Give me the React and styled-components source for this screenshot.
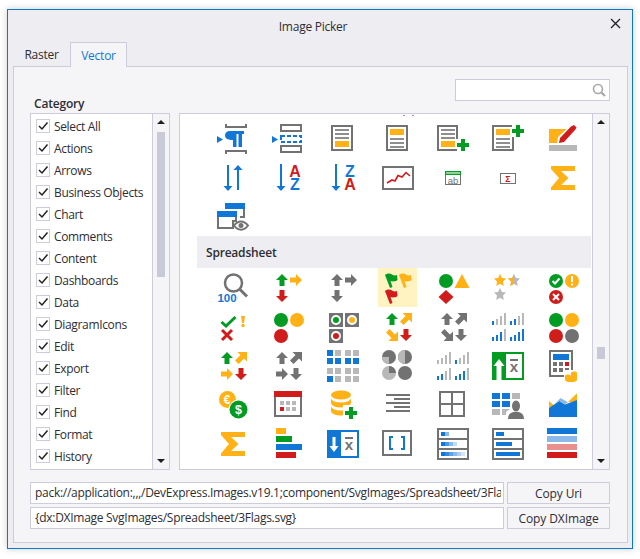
import React from 'react';
import styled, { createGlobalStyle } from 'styled-components';

const BLUE = '#1177d7';
const RED = '#d11c1c';
const YELLOW = '#ffb115';
const GREEN = '#039c23';
const GRAY = '#727272';
const LIGHT = '#b8b8b8';

const GlobalStyle = createGlobalStyle`
    html, body {
        margin: 0;
        background: #fff;
    }
    body {
        font-family: "Open Sans", "Liberation Sans", sans-serif;
        font-size: 12px;
        color: #2d2d33;
    }
`;

const Page = styled.div`
    width: 640px;
    height: 559px;
    padding: 9px 7px 10px 7px;
    box-sizing: border-box;
    overflow: hidden;
`;

const Dialog = styled.div`
    width: 626px;
    height: 540px;
    box-sizing: border-box;
    border: 1px solid #0e78c6;
    background: #eeeef2;
    box-shadow: 0 0 7px rgba(0, 0, 0, 0.2);
    display: flex;
    flex-direction: column;
`;

const TitleBar = styled.div`
    height: 32px;
    flex: none;
    box-sizing: border-box;
    padding-right: 14px;
    display: flex;
    align-items: center;
    justify-content: center;
    position: relative;
    font-size: 12px;
    letter-spacing: -0.25px;
`;

const CloseButton = styled.svg`
    position: absolute;
    right: 11px;
    top: 8px;
    width: 11px;
    height: 11px;
`;

const TabStrip = styled.div`
    height: 24px;
    flex: none;
    margin: 0 0 0 5px;
    display: flex;
    position: relative;
    z-index: 1;
`;

const Tab = styled.div`
    width: 57px;
    height: ${(p) => (p.$active ? '25px' : '24px')};
    box-sizing: border-box;
    display: flex;
    align-items: center;
    justify-content: center;
    letter-spacing: -0.25px;
    color: ${(p) => (p.$active ? BLUE : '#2d2d33')};
    background: ${(p) => (p.$active ? '#f5f5f8' : 'transparent')};
    border: 1px solid ${(p) => (p.$active ? '#ccccdc' : 'transparent')};
    border-bottom: none;
`;

const Panel = styled.div`
    width: 615px;
    height: 477px;
    flex: none;
    margin-left: 5px;
    box-sizing: border-box;
    border: 1px solid #ccccdc;
    background: #f5f5f8;
    padding: 12px 17px 0 16px;
    display: flex;
    flex-direction: column;
`;

const HeaderRow = styled.div`
    height: 34px;
    flex: none;
    display: flex;
    justify-content: space-between;
`;

const CategoryLabel = styled.div`
    align-self: flex-end;
    margin: 0 0 1px 4px;
    font-weight: 600;
    line-height: 16px;
    letter-spacing: -0.2px;
`;

const SearchBox = styled.div`
    width: 155px;
    height: 22px;
    box-sizing: border-box;
    border: 1px solid #ccccdc;
    background: #fff;
    display: flex;
    align-items: center;
    justify-content: flex-end;
    padding-right: 3px;
`;

const Content = styled.div`
    height: 357px;
    flex: none;
    display: flex;
    gap: 9px;
`;

const ListBox = styled.div`
    width: 140px;
    box-sizing: border-box;
    border: 1px solid #ccccdc;
    background: #fff;
    display: flex;
`;

const ListItems = styled.div`
    flex: 1;
    padding: 1px 0 0 5px;
    overflow: hidden;
`;

const ListRow = styled.div`
    height: 22px;
    display: flex;
    align-items: center;
    gap: 4px;
    white-space: nowrap;
    letter-spacing: -0.35px;
`;

const CheckBox = styled.span`
    width: 14px;
    height: 14px;
    box-sizing: border-box;
    border: 1px solid #ccccdc;
    background: #fff;
    display: flex;
    align-items: center;
    justify-content: center;
`;

const ScrollTrack = styled.div`
    width: 17px;
    flex: none;
    box-sizing: border-box;
    border-left: 1px solid #ccccdc;
    background: #f5f5f8;
    padding: 6px 0;
    display: flex;
    flex-direction: column;
    align-items: center;
`;

const ScrollArrow = styled.span`
    flex: none;
    width: 0;
    height: 0;
    border-left: 4px solid transparent;
    border-right: 4px solid transparent;
    ${(p) => (p.$down ? 'border-top: 4px solid #1e1e1e;' : 'border-bottom: 4px solid #1e1e1e;')}
`;

const ThumbSlot = styled.div`
    flex: 1;
    padding-top: ${(p) => p.$offset}px;
`;

const Thumb = styled.div`
    width: 8px;
    height: ${(p) => p.$length}px;
    background: #c9cad8;
`;

const Gallery = styled.div`
    width: 431px;
    box-sizing: border-box;
    border: 1px solid #ccccdc;
    background: #fff;
    display: flex;
`;

const GalleryBody = styled.div`
    flex: 1;
    padding-left: 17px;
    overflow: hidden;
`;

const PeekMarks = styled.svg`
    display: block;
    width: 394px;
    height: 5px;
`;

const IconGrid = styled.div`
    display: grid;
    grid-template-columns: repeat(7, 55px);
    grid-auto-rows: 39px;
    padding-left: 8px;
`;

const IconCell = styled.div`
    display: flex;
    justify-content: center;
`;

const Glyph = styled.svg`
    width: 39px;
    height: 39px;
    display: block;
    background: ${(p) => (p.$selected ? '#fff3c2' : 'transparent')};
`;

const SectionTitle = styled.div`
    width: 394px;
    height: 32px;
    box-sizing: border-box;
    padding-left: 9px;
    background: #eeeef2;
    display: flex;
    align-items: center;
    font-weight: 600;
    letter-spacing: -0.2px;
`;

const Footer = styled.div`
    margin-top: 12px;
    display: flex;
    flex-direction: column;
    gap: 3px;
`;

const FooterRow = styled.div`
    height: 22px;
    display: flex;
    gap: 3px;
`;

const PathField = styled.div`
    width: 474px;
    box-sizing: border-box;
    border: 1px solid #ccccdc;
    background: #fff;
    padding: 0 2px 0 4px;
    display: flex;
    align-items: center;
`;

const PathText = styled.div`
    overflow: hidden;
    white-space: nowrap;
    letter-spacing: -0.28px;
    line-height: 18px;
`;

const FooterButton = styled.div`
    width: 103px;
    box-sizing: border-box;
    border: 1px solid #ccccdc;
    background: #f5f5f8;
    display: flex;
    align-items: center;
    justify-content: center;
    letter-spacing: -0.1px;
`;

const LETTER_FONT = '"Liberation Sans", sans-serif';

// small shared drawings, x/y is the top left of their box
const Arrow = ({ x, y, c, r = 0 }) => (
    <path transform={`translate(${x} ${y}) rotate(${r} 6 6)`} fill={c} d="M6 0 12 6H8.5V12H3.5V6H0Z" />
);
const Slant = ({ x, y, c, r = 0 }) => (
    <path transform={`translate(${x} ${y}) rotate(${r} 6 6)`} fill={c} d="M2.5 0H12V9.5L9 6.5 3.5 12 0 8.5 5.5 3Z" />
);
const Plus = ({ x, y }) => (
    <path transform={`translate(${x} ${y})`} fill={GREEN} d="M4 0H8V4H12V8H8V12H4V8H0V4H4Z" />
);
const Flag = ({ x, y, c }) => (
    <path transform={`translate(${x} ${y})`} fill={c} d="M0 2C2 0 5 0 7 1.500 9 3 11 2.500 12 2L12.500 7C10 9 7 8.500 5.500 8L7.500 14 5 15Z" />
);
const Star = ({ x, y, c }) => (
    <polygon transform={`translate(${x} ${y})`} fill={c} points="6,0 7.900,4 12,4.600 9,7.500 9.700,12 6,9.800 2.300,12 3,7.500 0,4.600 4.100,4" />
);
const Dot = ({ x, y, c, r = 7 }) => <circle cx={x} cy={y} r={r} fill={c} />;
const Signal = ({ x, y, blue }) => (
    <g transform={`translate(${x} ${y})`}>
        {[4, 6, 9, 12].map((h, i) => (
            <rect key={i} x={i * 4} y={12 - h} width="2" height={h} fill={i < blue ? BLUE : LIGHT} />
        ))}
    </g>
);
const Letter = ({ x, y, c, size = 16, children, weight = 700 }) => (
    <text x={x} y={y} fill={c} fontSize={size} fontWeight={weight} fontFamily={LETTER_FONT} textAnchor="middle">
        {children}
    </text>
);
const Lines = ({ rows, x = 12, w = 14 }) => rows.map((y) => <rect key={y} x={x} y={y - 1} width={w} height="2" fill="#8e8e8e" />);
const Frame = ({ x, y, w, h, c = GRAY, fill = 'none' }) => (
    <rect x={x + 1} y={y + 1} width={w - 2} height={h - 2} fill={fill} stroke={c} strokeWidth="2" />
);
const Sigma = () => <path fill={YELLOW} d="M8 8H32V13H18L25.500 20 18 27H32V32H8V29.500L16 20 8 11Z" />;
const XBar = ({ x }) => (
    <>
        <rect x={x - 4} y="13" width="8" height="2" fill={GRAY} />
        <Letter x={x} y="26" c={GRAY} size={15}>x</Letter>
    </>
);

const TOP_ICONS = [
    <>
        <path d="M13 5V8H33V5M13 35V32H33V35" fill="none" stroke={GRAY} strokeWidth="2" />
        <polygon points="4,17 10,20.500 4,24" fill={BLUE} />
        <path fill={BLUE} d="M17 12H31V15H29V28H25.500V15H23.500V28H20V21C15 21 12 19.500 12 16.500 12 13.500 14 12 17 12Z" />
    </>,
    <>
        <polygon points="4,17 10,20.500 4,24" fill={BLUE} />
        <Frame x={12} y={5} w={22} h={8} />
        <rect x="13" y="17" width="20" height="6" fill="none" stroke={BLUE} strokeWidth="2" strokeDasharray="4 2" />
        <Frame x={12} y={26} w={22} h={8} />
    </>,
    <>
        <Frame x={8} y={6} w={22} h={26} />
        <Lines rows={[11, 15, 19]} />
        <rect x="12" y="22" width="14" height="6" fill={YELLOW} />
    </>,
    <>
        <Frame x={8} y={6} w={22} h={26} />
        <rect x="12" y="10" width="14" height="6" fill={YELLOW} />
        <Lines rows={[20, 24, 28]} />
    </>,
    <>
        <path fill="none" stroke={GRAY} strokeWidth="2" d="M24 20V7H5V31H24" />
        <Lines rows={[11, 15, 19]} x={8} />
        <rect x="8" y="22" width="14" height="6" fill={YELLOW} />
        <Plus x={24} y={20} />
    </>,
    <>
        <path fill="none" stroke={GRAY} strokeWidth="2" d="M24 7H5V31H25V18" />
        <rect x="8" y="10" width="14" height="6" fill={YELLOW} />
        <Lines rows={[20, 24, 28]} x={8} />
        <Plus x={24} y={6} />
    </>,
    <>
        <path fill={YELLOW} d="M6 10H24L15 22V24H6Z" />
        <rect x="6" y="26" width="28" height="6" fill={LIGHT} />
        <path fill="#fff" d="M14 25 15 18 29 5 35 11 21 25Z" />
        <path fill={RED} d="M16 24 17 19 28 7.500 31 6 33.500 8.500 32 11 21 23Z" />
    </>,
    <>
        <path fill="none" stroke={BLUE} strokeWidth="2" d="M15 7V30" />
        <polygon points="10.500,28 19.500,28 15,33" fill={BLUE} />
        <path fill="none" stroke={BLUE} strokeWidth="2" d="M25 10V32" />
        <polygon points="20.500,12 29.500,12 25,7" fill={BLUE} />
    </>,
    <>
        <path fill="none" stroke={BLUE} strokeWidth="2" d="M13 6V30" />
        <polygon points="8.500,28 17.500,28 13,33" fill={BLUE} />
        <Letter x={27} y="18.500" c={RED}>A</Letter>
        <Letter x={27} y="32" c={BLUE}>Z</Letter>
    </>,
    <>
        <path fill="none" stroke={BLUE} strokeWidth="2" d="M13 6V30" />
        <polygon points="8.500,28 17.500,28 13,33" fill={BLUE} />
        <Letter x={27} y="18.500" c={BLUE}>Z</Letter>
        <Letter x={27} y="32" c={RED}>A</Letter>
    </>,
    <>
        <Frame x={4} y={8} w={32} h={24} />
        <polyline fill="none" stroke={RED} strokeWidth="1.600" points="9,25 14,22 17,23 20,17.500 24,19 28,14.500 32,18" />
    </>,
    <>
        <rect x="12.500" y="13.500" width="15" height="13" fill="#fff" stroke={GRAY} />
        <rect x="12" y="13" width="16" height="4" fill={GREEN} />
        <rect x="13" y="14" width="14" height="2" fill="#8fd29f" />
        <Letter x={20} y="25.500" c={GRAY} size={9.500} weight={400}>ab</Letter>
    </>,
    <>
        <rect x="12.500" y="15.500" width="15" height="10" fill="#fff" stroke={GRAY} />
        <Letter x={20} y="24" c={RED} size={9}>Σ</Letter>
    </>,
    <Sigma />,
    <>
        <path fill="none" stroke={GRAY} strokeWidth="2" d="M13 8V7H31V20H27" />
        <rect x="12" y="6" width="20" height="6" fill={BLUE} />
        <path fill="#fff" stroke={GRAY} strokeWidth="2" d="M5 15H23V24H20V31H5Z" />
        <rect x="4" y="14" width="20" height="6" fill={BLUE} />
        <path fill="#fff" stroke={GRAY} strokeWidth="2" d="M21 28.500C25 23 31 23 35 28.500 31 34 25 34 21 28.500Z" />
        <circle cx="28" cy="28.500" r="2.500" fill={GRAY} />
    </>,
];

const SHEET_ICONS = [
    <>
        <circle cx="20.500" cy="15" r="8.500" fill="none" stroke={GRAY} strokeWidth="2.500" />
        <path d="M26.500 21 34 28.500" stroke={GRAY} strokeWidth="3" />
        <Letter x={14} y="34" c={BLUE} size={11.500}>100</Letter>
    </>,
    <>
        <Arrow x={8} y={6} c={GREEN} />
        <Arrow x={22} y={6} c={YELLOW} r={90} />
        <Arrow x={8} y={22} c={RED} r={180} />
    </>,
    <>
        <Arrow x={8} y={6} c={GRAY} />
        <Arrow x={22} y={6} c={GRAY} r={90} />
        <Arrow x={8} y={22} c={GRAY} r={180} />
    </>,
    <>
        <Flag x={7} y={5} c={GREEN} />
        <Flag x={21} y={5} c={YELLOW} />
        <Flag x={7} y={21} c={RED} />
    </>,
    <>
        <Dot x={13} y={13} c={GREEN} />
        <polygon points="29,6 36.500,20 21.500,20" fill={YELLOW} />
        <polygon points="13,22 20.500,29 13,36 5.500,29" fill={RED} />
    </>,
    <>
        <Star x={6} y={6} c={YELLOW} />
        <Star x={20} y={6} c={LIGHT} />
        <polygon points="26,6 26,15.800 22.300,18 23,13.500 20,10.600 24.100,10" fill={YELLOW} />
        <Star x={6} y={20} c={LIGHT} />
    </>,
    <>
        <Dot x={13} y={13} c={GREEN} />
        <path d="M9.500 13 12 15.500 16.500 10.500" fill="none" stroke="#fff" strokeWidth="2" />
        <Dot x={29} y={13} c={YELLOW} />
        <rect x="28" y="8" width="2" height="6" fill="#fff" />
        <rect x="28" y="15.500" width="2" height="2" fill="#fff" />
        <Dot x={13} y={29} c={RED} />
        <path d="M10 26 16 32M16 26 10 32" stroke="#fff" strokeWidth="2" />
    </>,
    <>
        <path d="M8.500 15 13 19 22.500 10" fill="none" stroke={GREEN} strokeWidth="3" />
        <path fill={YELLOW} d="M28 9H32L31 16H29Z" />
        <circle cx="30" cy="18.500" r="1.700" fill={YELLOW} />
        <path d="M9 23 19 33M19 23 9 33" stroke={RED} strokeWidth="3" />
    </>,
    <>
        <Dot x={13} y={13} c={GREEN} />
        <Dot x={29} y={13} c={YELLOW} />
        <Dot x={13} y={29} c={RED} />
    </>,
    <>
        {[[6, 6, GREEN], [22, 6, YELLOW], [6, 22, RED]].map(([x, y, c]) => (
            <g key={c}>
                <rect x={x} y={y} width="14" height="14" fill={GRAY} />
                <circle cx={x + 7} cy={y + 7} r="5" fill="#fff" />
                <circle cx={x + 7} cy={y + 7} r="3" fill={c} />
            </g>
        ))}
    </>,
    <>
        <Arrow x={8} y={6} c={GREEN} />
        <Slant x={22} y={6} c={YELLOW} />
        <Slant x={8} y={22} c={YELLOW} r={90} />
        <Arrow x={22} y={22} c={RED} r={180} />
    </>,
    <>
        <Arrow x={8} y={6} c={GRAY} />
        <Slant x={22} y={6} c={GRAY} />
        <Slant x={8} y={22} c={GRAY} r={90} />
        <Arrow x={22} y={22} c={GRAY} r={180} />
    </>,
    <>
        <Signal x={4} y={6} blue={1} />
        <Signal x={22} y={6} blue={2} />
        <Signal x={4} y={22} blue={3} />
        <Signal x={22} y={22} blue={4} />
    </>,
    <>
        <Dot x={13} y={13} c={GREEN} />
        <Dot x={29} y={13} c={YELLOW} />
        <Dot x={13} y={29} c={RED} />
        <Dot x={29} y={29} c={GRAY} />
    </>,
    <>
        <Arrow x={8} y={6} c={GREEN} />
        <Slant x={22} y={6} c={YELLOW} />
        <Arrow x={8} y={22} c={YELLOW} r={90} />
        <Arrow x={22} y={22} c={RED} r={180} />
    </>,
    <>
        <Arrow x={8} y={6} c={GRAY} />
        <Slant x={22} y={6} c={GRAY} />
        <Arrow x={8} y={22} c={GRAY} r={90} />
        <Arrow x={22} y={22} c={GRAY} r={180} />
    </>,
    <>
        {[
            [4, 4, BLUE], [12, 4, LIGHT], [4, 12, BLUE], [12, 12, BLUE],
            [22, 4, LIGHT], [30, 4, LIGHT], [22, 12, BLUE], [30, 12, BLUE],
            [4, 22, LIGHT], [12, 22, LIGHT], [4, 30, BLUE], [12, 30, LIGHT],
            [22, 22, LIGHT], [30, 22, LIGHT], [22, 30, LIGHT], [30, 30, LIGHT],
        ].map(([x, y, c]) => (
            <rect key={`${x}-${y}`} x={x} y={y} width="6" height="6" fill={c} />
        ))}
    </>,
    <>
        <Dot x={11} y={11} c={GRAY} />
        <path fill={LIGHT} d="M11 11V18A7 7 0 0 1 4 11Z" />
        <Dot x={27} y={11} c={GRAY} />
        <path fill={LIGHT} d="M27 4V18A7 7 0 0 1 27 4Z" />
        <Dot x={11} y={27} c={LIGHT} />
        <path fill={GRAY} d="M11 27V20A7 7 0 0 1 18 27Z" />
        <Dot x={27} y={27} c={GRAY} />
    </>,
    <>
        <Signal x={4} y={6} blue={0} />
        <Signal x={22} y={6} blue={1} />
        <Signal x={4} y={22} blue={2} />
        <Signal x={22} y={22} blue={3} />
    </>,
    <>
        <rect x="4" y="6" width="32" height="28" fill={GREEN} />
        <rect x="18" y="8" width="16" height="24" fill="#fff" />
        <path fill="#fff" d="M11 13 16.500 20H13.500V34H8.500V20H5.500Z" />
        <XBar x={26} />
    </>,
    <>
        <Frame x={6} y={4} w={24} h={27} />
        <rect x="10" y="8" width="16" height="6" fill={BLUE} />
        {[[10, 16], [16, 16], [10, 22], [16, 22], [22, 22]].map(([x, y]) => (
            <rect key={`${x}-${y}`} x={x} y={y} width="4" height="4" fill={GRAY} />
        ))}
        <rect x="22" y="16" width="4" height="4" fill={RED} />
        <rect x="21" y="24" width="14" height="13" fill="#fff" />
        <path fill={YELLOW} d="M28 26.500A3.500 2 0 0 1 34 26.500V34A6 2 0 0 1 22 34V31A3 2 0 0 1 28 30Z" />
    </>,
    <>
        <Dot x={14.500} y={14.500} c={YELLOW} r={8.500} />
        <Letter x={14} y="19" c="#fff" size={12}>€</Letter>
        <Dot x={25.500} y={24.500} c="#fff" r={10} />
        <Dot x={25.500} y={24.500} c={GREEN} r={9} />
        <Letter x={25.500} y="29" c="#fff" size={12.500}>$</Letter>
    </>,
    <>
        <Frame x={6} y={6} w={28} h={26} />
        <rect x="6" y="6" width="28" height="6" fill={RED} />
        {[[12, 16, LIGHT], [18, 16, LIGHT], [24, 16, LIGHT], [12, 22, RED], [18, 22, LIGHT], [24, 22, LIGHT]].map(([x, y, c]) => (
            <rect key={`${x}-${y}`} x={x} y={y} width="4" height="4" fill={c} />
        ))}
    </>,
    <>
        <ellipse cx="18" cy="10" rx="10" ry="4.500" fill={YELLOW} />
        <path fill={YELLOW} d="M8 13A10 4.500 0 0 0 28 13V18A10 4.500 0 0 1 8 18Z" />
        <path fill={YELLOW} d="M8 21A10 4.500 0 0 0 28 21V26A10 4.500 0 0 1 8 26Z" />
        <rect x="20" y="20" width="16" height="16" fill="#fff" />
        <Plus x={22} y={22} />
    </>,
    <>
        {[[8, 10], [16, 14], [8, 18], [16, 22], [8, 26]].map(([x, y]) => (
            <rect key={y} x={x} y={y - 1} width={32 - x} height="2" fill={GRAY} />
        ))}
    </>,
    <>
        <Frame x={6} y={6} w={26} h={26} />
        <path d="M19 6V32M6 19H32" stroke={GRAY} strokeWidth="2" />
    </>,
    <>
        {[[4, 8], [14, 8], [4, 16], [14, 16]].map(([x, y]) => (
            <rect key={`${x}-${y}`} x={x} y={y} width="8" height="6" fill={BLUE} />
        ))}
        {[[24, 8], [4, 24], [14, 24]].map(([x, y]) => (
            <rect key={`${x}-${y}`} x={x} y={y} width="8" height="6" fill={LIGHT} />
        ))}
        <path fill="#fff" d="M18 35V27L22 24V15H32V35Z" />
        <ellipse cx="28" cy="21" rx="4" ry="5.500" fill={GRAY} />
        <path fill={GRAY} d="M20 34C20 29 23 28 25 27H31C33 28 36 29 36 34Z" />
    </>,
    <>
        <polygon points="6,16 11.300,20.700 6,23" fill={YELLOW} />
        <polygon points="34,8.300 34,16.700 24.700,17.300" fill={YELLOW} />
        <polygon points="6,23 16.300,16 22,19.500 34,15 34,32 6,32" fill={BLUE} />
        <polygon points="11.300,19.500 17.500,13 25,17.300 22,19.500 16.300,16" fill="#8bb9e9" />
    </>,
    <Sigma />,
    <>
        <rect x="8" y="4" width="10" height="6" fill={YELLOW} />
        <rect x="8" y="12" width="16" height="6" fill={GREEN} />
        <rect x="8" y="20" width="26" height="6" fill={BLUE} />
        <rect x="8" y="28" width="20" height="6" fill={RED} />
    </>,
    <>
        <rect x="4" y="6" width="32" height="28" fill={BLUE} />
        <rect x="18" y="8" width="16" height="24" fill="#fff" />
        <path fill="#fff" d="M9.500 13H12.500V22H15.500L11 28 6.500 22H9.500Z" />
        <XBar x={26} />
    </>,
    <>
        <Frame x={4} y={6} w={30} h={26} />
        <path d="M15 13H12V25H15M23 13H26V25H23" fill="none" stroke={BLUE} strokeWidth="2" />
    </>,
    <>
        <Frame x={4} y={4} w={32} h={32} />
        <path d="M4 15H36M4 25H36" stroke={GRAY} strokeWidth="2" />
        <rect x="8" y="8" width="4" height="4" fill={BLUE} />
        <rect x="12" y="8" width="4" height="4" fill="#8bb9e9" />
        {['#1177d7', '#4a97e0', '#8bb9e9', '#c3dbf4'].map((c, i) => (
            <rect key={c} x={8 + i * 4} y="18" width="4" height="4" fill={c} />
        ))}
        {['#1177d7', '#338adb', '#5fa3e3', '#8bb9e9', '#aecfef', '#d3e5f7'].map((c, i) => (
            <rect key={c} x={8 + i * 4} y="28" width="4" height="4" fill={c} />
        ))}
    </>,
    <>
        <Frame x={4} y={4} w={32} h={32} />
        <path d="M4 15H36M4 25H36" stroke={GRAY} strokeWidth="2" />
        <rect x="8" y="8" width="8" height="4" fill={BLUE} />
        <rect x="8" y="18" width="16" height="4" fill={BLUE} />
        <rect x="8" y="28" width="24" height="4" fill={BLUE} />
    </>,
    <>
        <rect x="4" y="4" width="30" height="6" fill={BLUE} />
        <rect x="4" y="12" width="30" height="6" fill="#8bb9e9" />
        <rect x="4" y="20" width="30" height="6" fill="#e89090" />
        <rect x="4" y="28" width="30" height="6" fill={RED} />
    </>,
];

const CATEGORIES = [
    'Select All', 'Actions', 'Arrows', 'Business Objects', 'Chart', 'Comments', 'Content', 'Dashboards',
    'Data', 'DiagramIcons', 'Edit', 'Export', 'Filter', 'Find', 'Format', 'History',
];

const PATHS = [
    { value: 'pack://application:,,,/DevExpress.Images.v19.1;component/SvgImages/Spreadsheet/3Flags.svg', action: 'Copy Uri' },
    { value: '{dx:DXImage SvgImages/Spreadsheet/3Flags.svg}', action: 'Copy DXImage' },
];

const Scrollbar = ({ offset, length }) => (
    <ScrollTrack>
        <ScrollArrow />
        <ThumbSlot $offset={offset}>
            <Thumb $length={length} />
        </ThumbSlot>
        <ScrollArrow $down />
    </ScrollTrack>
);

const Icons = ({ list, selected }) => (
    <IconGrid>
        {list.map((icon, i) => (
            <IconCell key={i}>
                <Glyph viewBox="0 0 39 39" $selected={i === selected}>{icon}</Glyph>
            </IconCell>
        ))}
    </IconGrid>
);

const App = () => (
    <Page>
        <GlobalStyle />
        <Dialog>
            <TitleBar>
                Image Picker
                <CloseButton viewBox="0 0 11 11">
                    <path d="M1 1 10 10M10 1 1 10" stroke="#222" strokeWidth="1.300" fill="none" />
                </CloseButton>
            </TitleBar>
            <TabStrip>
                <Tab>Raster</Tab>
                <Tab $active>Vector</Tab>
            </TabStrip>
            <Panel>
                <HeaderRow>
                    <CategoryLabel>Category</CategoryLabel>
                    <SearchBox>
                        <svg width="14" height="14" viewBox="0 0 14 14">
                            <circle cx="6" cy="6" r="4.500" fill="none" stroke="#a8a8a8" strokeWidth="1.600" />
                            <path d="M9.500 9.500 13 13" stroke="#a8a8a8" strokeWidth="2.200" />
                        </svg>
                    </SearchBox>
                </HeaderRow>
                <Content>
                    <ListBox>
                        <ListItems>
                            {CATEGORIES.map((name) => (
                                <ListRow key={name}>
                                    <CheckBox>
                                        <svg width="12" height="12" viewBox="0 0 12 12">
                                            <path d="M2 6 5 9 10.500 2.500" fill="none" stroke="#222" strokeWidth="1.500" />
                                        </svg>
                                    </CheckBox>
                                    {name}
                                </ListRow>
                            ))}
                        </ListItems>
                        <Scrollbar offset={8} length={145} />
                    </ListBox>
                    <Gallery>
                        <GalleryBody>
                            <PeekMarks viewBox="0 0 394 5">
                                <path d="M206 1.500H208M215 1.500H217" stroke="#e07a7a" strokeWidth="1" />
                            </PeekMarks>
                            <Icons list={TOP_ICONS} />
                            <SectionTitle>Spreadsheet</SectionTitle>
                            <Icons list={SHEET_ICONS} selected={3} />
                        </GalleryBody>
                        <Scrollbar offset={223} length={12} />
                    </Gallery>
                </Content>
                <Footer>
                    {PATHS.map((row) => (
                        <FooterRow key={row.action}>
                            <PathField>
                                <PathText>{row.value}</PathText>
                            </PathField>
                            <FooterButton>{row.action}</FooterButton>
                        </FooterRow>
                    ))}
                </Footer>
            </Panel>
        </Dialog>
    </Page>
);

export default App;
